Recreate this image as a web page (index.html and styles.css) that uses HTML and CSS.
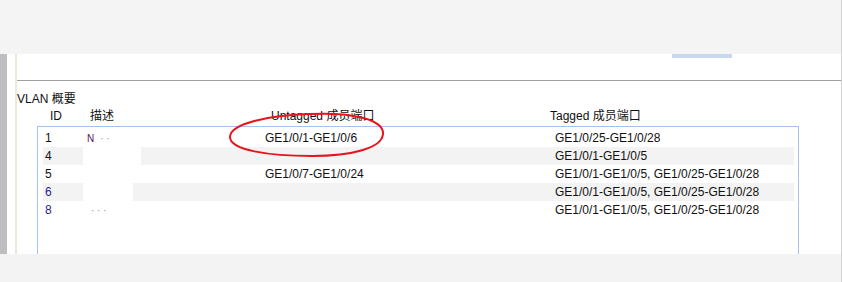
FILE: index.html
```html
<!DOCTYPE html>
<html lang="zh">
<head>
<meta charset="utf-8">
<title>VLAN 概要</title>
<link rel="stylesheet" href="styles.css">
</head>
<body>
<div class="frame">
  <div class="topbar"></div>
  <div class="main">
    <div class="sidebar">
      <div class="side-gray"></div>
      <div class="side-white"></div>
      <div class="side-beige"></div>
    </div>
    <div class="panel">
      <div class="tabrow"><div class="tab"></div></div>
      <div class="rule"></div>
      <div class="title">VLAN 概要</div>
      <div class="head">
        <span>ID</span>
        <span>描述</span>
        <span>Untagged 成员端口</span>
        <span>Tagged 成员端口</span>
      </div>
      <div class="box">
        <div class="row">
          <span class="id">1</span>
          <span class="desc"><span class="frag">N</span><span class="dots">· ·</span></span>
          <span>GE1/0/1-GE1/0/6</span>
          <span>GE1/0/25-GE1/0/28</span>
        </div>
        <div class="row alt">
          <span class="id">4</span>
          <span class="desc"><span class="redact"></span></span>
          <span></span>
          <span>GE1/0/1-GE1/0/5</span>
        </div>
        <div class="row">
          <span class="id">5</span>
          <span class="desc"></span>
          <span>GE1/0/7-GE1/0/24</span>
          <span>GE1/0/1-GE1/0/5, GE1/0/25-GE1/0/28</span>
        </div>
        <div class="row alt">
          <span class="id blue">6</span>
          <span class="desc"><span class="redact short"></span></span>
          <span></span>
          <span>GE1/0/1-GE1/0/5, GE1/0/25-GE1/0/28</span>
        </div>
        <div class="row">
          <span class="id blue">8</span>
          <span class="desc"><span class="dots">· · ·</span></span>
          <span></span>
          <span>GE1/0/1-GE1/0/5, GE1/0/25-GE1/0/28</span>
        </div>
      </div>
    </div>
  </div>
  <div class="bottombar"></div>
  <svg class="mark" width="170" height="54" viewBox="0 0 170 54">
    <path d="M84 4 C 128 2, 158 10, 157 24 C 156 38, 126 46, 86 46 C 42 46, 4 40, 4 27 C 4 14, 42 5, 84 4 Z" fill="none" stroke="#e8141b" stroke-width="2"/>
  </svg>
</div>
</body>
</html>
```
FILE: styles.css
```css
html, body {
  margin: 0;
  padding: 0;
  background: #ffffff;
}

body {
  font-family: "Liberation Sans", Arial, "Noto Sans CJK SC", sans-serif;
  font-size: 12px;
  color: #111111;
}

.frame {
  position: relative;
  width: 841px;
  height: 282px;
  border-right: 1px solid #d2d2d2;
  overflow: hidden;
}

.topbar {
  height: 54px;
  background: #f4f4f4;
}

.bottombar {
  height: 28px;
  background: #f3f3f3;
}

.main {
  display: flex;
  height: 200px;
  overflow: hidden;
}

.sidebar {
  display: flex;
  flex: none;
}

.side-gray {
  width: 7px;
  background: #bebebe;
}

.side-white {
  width: 8px;
  background: #ffffff;
}

.side-beige {
  width: 2px;
  background: #ece9d8;
}

.panel {
  flex: 1;
  display: flex;
  flex-direction: column;
}

.tabrow {
  height: 26px;
  flex: none;
}

.tab {
  margin-left: 655px;
  width: 60px;
  height: 4px;
  background: #c7d8ef;
}

.rule {
  flex: none;
  height: 1px;
  background: #a0a0a0;
}

.title {
  flex: none;
  margin-top: 11px;
  height: 14px;
  line-height: 14px;
}

.head {
  flex: none;
  display: grid;
  grid-template-columns: 40px 181px 279px 1fr;
  padding-left: 33px;
  margin-top: 3px;
  height: 14px;
  line-height: 14px;
}

.box {
  flex: none;
  margin-top: 3px;
  margin-left: 20px;
  width: 762px;
  box-sizing: border-box;
  border: 1px solid #a3c2ec;
  padding: 2px 4px 0 5px;
  height: 200px;
}

.row {
  display: grid;
  grid-template-columns: 42px 178px 290px 1fr;
  padding-left: 2px;
  height: 18px;
  line-height: 18px;
  white-space: nowrap;
}

.row.alt {
  background: #f3f3f3;
}

.id.blue {
  color: #23239c;
}

.desc {
  position: relative;
}

.redact {
  display: block;
  margin-left: -4px;
  width: 58px;
  height: 18px;
  background: #ffffff;
}

.redact.short {
  width: 50px;
}

.frag {
  color: #5a1850;
  font-size: 10px;
  letter-spacing: 2px;
}

.dots {
  color: #8a8ab0;
  font-size: 10px;
  margin-left: 4px;
}

.mark {
  position: absolute;
  left: 226px;
  top: 110px;
}
```
